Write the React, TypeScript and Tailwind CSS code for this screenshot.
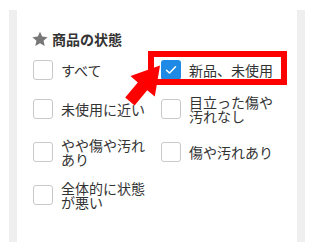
import React from "react";

type Item = {
  label: string;
  checked?: boolean;
  highlight?: boolean;
};

const items: Item[] = [
  { label: "すべて" },
  { label: "新品、未使用", checked: true, highlight: true },
  { label: "未使用に近い" },
  { label: "目立った傷や汚れなし" },
  { label: "やや傷や汚れあり" },
  { label: "傷や汚れあり" },
  { label: "全体的に状態が悪い" },
];

const Checkbox = ({ checked }: { checked?: boolean }) =>
  checked ? (
    <span className="flex h-5 w-5 shrink-0 items-center justify-center rounded-[3px] bg-[#1e8ae6]">
      <svg width="12" height="10" viewBox="0 0 12 10" fill="none">
        <path d="M1.5 5.2 4.5 8 10.5 1.8" stroke="#fff" strokeWidth="1.5" strokeLinecap="round" strokeLinejoin="round" />
      </svg>
    </span>
  ) : (
    <span className="h-5 w-5 shrink-0 rounded-[3px] border border-[#c9c9c9] bg-white" />
  );

export default function App() {
  return (
    <div
      className="h-[246px] w-[313px] bg-white pl-[9px] pt-[10px] text-[#333]"
      style={{ fontFamily: '"Noto Sans CJK JP", "Noto Sans", sans-serif' }}
    >
      <div className="relative h-[232px] w-[296px] border-x-8 border-[#efefef] bg-white pl-4 pt-[19px]">
        {/* Heading */}
        <div className="flex h-5 items-center gap-[4px]">
          <svg width="16" height="16" viewBox="0 0 24 24" className="-ml-px">
            <path
              d="M12 1l3.3 7.4 8 .8-6 5.4 1.8 7.9L12 18.4l-7.1 4.1 1.8-7.9-6-5.4 8-.8z"
              fill="#777"
            />
          </svg>
          <span className="text-[14px] font-bold leading-5">商品の状態</span>
        </div>

        {/* Options */}
        <div className="mt-[11px] grid grid-cols-[128px_1fr] gap-y-[15px]">
          {items.map((item, i) => (
            <div key={i} className="relative flex items-center gap-2">
              {item.highlight && (
                <span className="absolute left-[-13px] top-[-9px] h-[34px] w-[139px] border-[6px] border-[#ff0000]" />
              )}
              <Checkbox checked={item.checked} />
              <span className="relative w-[90px] text-[14px] leading-[14px]">{item.label}</span>
            </div>
          ))}
        </div>

        {/* Arrow */}
        <svg className="absolute left-[100px] top-[50px]" width="50" height="50" viewBox="0 0 50 50">
          <polygon
            points="43,5.5 13.5,16 20.8,22.4 8.2,37.4 17.6,45.4 30.2,30.2 37.8,36.6"
            fill="#ff0000"
          />
        </svg>
      </div>
    </div>
  );
}
